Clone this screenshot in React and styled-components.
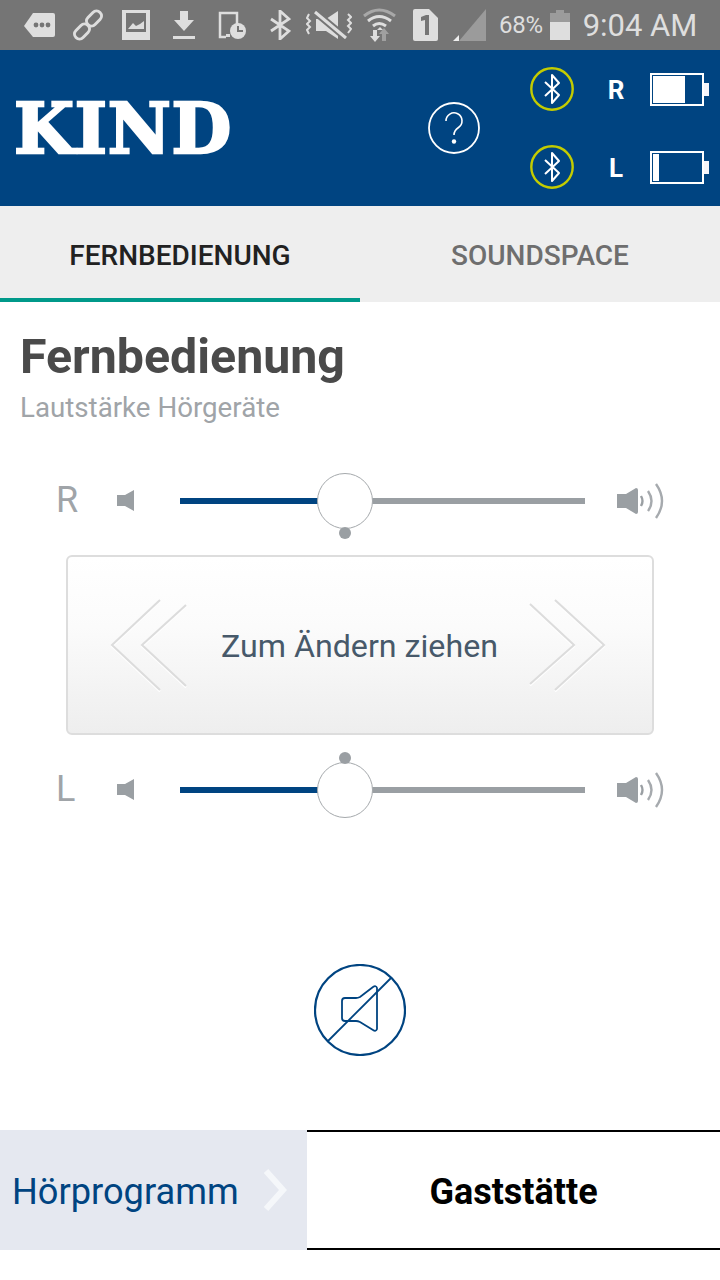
import React from "react";
import styled, { createGlobalStyle } from "styled-components";

const GlobalStyle = createGlobalStyle`
  html, body {
    margin: 0;
    padding: 0;
    background: #fff;
    font-family: Roboto, "Noto Sans", sans-serif;
  }
`;

const Page = styled.div`
  width: 720px;
  height: 1280px;
  overflow: hidden;
  display: flex;
  flex-direction: column;
  background: #fff;
`;

const StatusBar = styled.div`
  height: 50px;
  flex: none;
  background: #757575;
  display: flex;
  align-items: center;
  padding-left: 24px;
  color: #dedede;
`;

const StatusIcon = styled.svg`
  flex: none;
  margin-left: ${(p) => p.$gap || 0}px;
`;

const Percent = styled.span`
  font-size: 24px;
  margin-left: 13px;
  letter-spacing: -0.3px;
`;

const Clock = styled.span`
  font-size: 31px;
  margin-left: 13px;
`;

const Header = styled.header`
  height: 156px;
  flex: none;
  background: #004481;
  display: flex;
  align-items: center;
  padding-left: 14px;
  color: #fff;
`;

const Logo = styled.div`
  width: 217px;
  padding: 2px 0 0 0;
  box-sizing: border-box;
  font-family: "DejaVu Serif", "Liberation Serif", serif;
  font-weight: 700;
  font-size: 69px;
  line-height: 80px;
  letter-spacing: 0.7px;
  -webkit-text-stroke: 2.4px #fff;
  white-space: nowrap;
`;

const HelpIcon = styled.svg`
  margin-left: 197px;
  flex: none;
`;

const LinkColumn = styled.div`
  margin-left: 50px;
  display: flex;
  flex-direction: column;
  gap: 34px;
`;

const LinkRow = styled.div`
  display: flex;
  align-items: center;
  height: 44px;
`;

const SideLabel = styled.span`
  width: 84px;
  padding-top: 2px;
  text-align: center;
  font-size: 26px;
  font-weight: 700;
  margin-right: -8px;
`;

const Battery = styled.div`
  position: relative;
  box-sizing: border-box;
  width: 54px;
  height: 33px;
  border: 2px solid #fff;
  padding: 1px;
  display: flex;

  &::after {
    content: "";
    position: absolute;
    left: 52px;
    top: 8px;
    width: 5px;
    height: 13px;
    background: #f5f5fa;
  }
`;

const BatteryFill = styled.div`
  background: #fff;
`;

const Tabs = styled.nav`
  height: 96px;
  flex: none;
  display: flex;
  background: #eeeeee;
`;

const Tab = styled.div`
  box-sizing: border-box;
  width: 360px;
  display: flex;
  align-items: center;
  justify-content: center;
  padding-top: 6px;
  font-size: 28px;
  font-weight: 500;
  color: ${(p) => (p.$active ? "#212121" : "#6e6e6e")};
  border-bottom: 4px solid ${(p) => (p.$active ? "#00998a" : "transparent")};
`;

const Main = styled.main`
  flex: 1;
  display: flex;
  flex-direction: column;
  min-height: 0;
`;

const Title = styled.h1`
  margin: 29px 0 0 20px;
  font-size: 48.3px;
  line-height: 52px;
  font-weight: 700;
  color: #4a4a4a;
`;

const Subtitle = styled.div`
  margin: 10px 0 0 20px;
  font-size: 27.7px;
  line-height: 30px;
  color: #a0a4a8;
`;

const SliderRow = styled.div`
  margin-top: ${(p) => p.$top}px;
  height: 56px;
  padding-left: 57px;
  display: grid;
  grid-template-columns: 60px 63px 405px auto;
  align-items: center;
`;

const SideName = styled.span`
  font-size: 36px;
  color: #a0a4a8;
  line-height: 40px;
  margin-left: -1px;
  margin-top: -2px;
`;

const Track = styled.div`
  position: relative;
  height: 6px;
  background: #9a9fa3;
`;

const TrackFill = styled.div`
  height: 100%;
  background: #004481;
`;

const Thumb = styled.div`
  position: absolute;
  left: 137px;
  top: -25px;
  box-sizing: border-box;
  width: 56px;
  height: 56px;
  border-radius: 50%;
  background: #fff;
  border: 1px solid #a5a9ac;

  &::after {
    content: "";
    position: absolute;
    left: 21px;
    ${(p) => (p.$dot === "below" ? "top: 53px;" : "bottom: 53px;")}
    width: 12px;
    height: 12px;
    border-radius: 50%;
    background: #9a9fa3;
  }
`;

const LoudIcon = styled.svg`
  margin-left: 32px;
`;

const DragPad = styled.div`
  box-sizing: border-box;
  margin: 26px 0 0 66px;
  width: 588px;
  height: 180px;
  padding: 0 46px 0 42px;
  display: flex;
  align-items: center;
  justify-content: space-between;
  border: 2px solid #dddddd;
  border-radius: 6px;
  background: linear-gradient(#ffffff 0%, #fbfbfb 40%, #eeeeee 100%);
  font-size: 32.2px;
  color: #47596a;
`;

const PadLabel = styled.span`
  padding: 2px 0 0 3px;
`;

const MuteButton = styled.svg`
  margin: 146px auto 0;
  display: block;
  flex: none;
`;

const ProgramBar = styled.div`
  margin-top: 74px;
  height: 120px;
  flex: none;
  display: flex;
`;

const ProgramLabel = styled.div`
  width: 307px;
  box-sizing: border-box;
  padding: 0 20px 0 12px;
  display: flex;
  align-items: center;
  justify-content: space-between;
  background: #e5e8f0;
  color: #004481;
  font-size: 36.2px;
`;

const ProgramName = styled.span`
  padding-top: 3px;
`;

const ProgramValue = styled.div`
  flex: 1;
  display: flex;
  align-items: center;
  justify-content: center;
  padding-top: 4px;
  border-top: 2px solid #000;
  border-bottom: 2px solid #000;
  font-size: 36px;
  font-weight: 700;
  color: #000;
`;

function BluetoothMark({ size = 44 }) {
  return (
    <svg width={size} height={size} viewBox="0 0 44 44" fill="none">
      <circle cx="22" cy="22" r="20.7" stroke="#c3cc00" strokeWidth="2.4" />
      <path
        d="M15 15 29 28 22 36V8l7 8-14 13"
        stroke="#fff"
        strokeWidth="2"
        strokeLinejoin="round"
      />
    </svg>
  );
}

function Chevrons({ flip }) {
  const points = flip
    ? ["2,6 46,47 2,86", "27,2 76,47 27,92"]
    : ["50,2 2,47 50,92", "76,7 32,47 76,88"];
  return (
    <svg width="78" height="94" viewBox="0 0 78 94" fill="none">
      {points.map((pts) => (
        <g key={pts}>
          <polyline points={pts} stroke="#fff" strokeWidth="2" transform="translate(0 1.5)" />
          <polyline points={pts} stroke="#dcdcdc" strokeWidth="2" />
        </g>
      ))}
    </svg>
  );
}

function Slider({ name, top, dot }) {
  return (
    <SliderRow $top={top}>
      <SideName>{name}</SideName>
      <svg width="18" height="22" viewBox="0 0 18 22">
        <path d="M0 5h8l9-5v21l-9-5H0z" fill="#9a9fa3" />
      </svg>
      <Track>
        <TrackFill style={{ width: "34%" }} />
        <Thumb $dot={dot} />
      </Track>
      <LoudIcon width="48" height="36" viewBox="0 0 48 36" fill="none">
        <path d="M0 11h9l10-6a2 2 0 0 1 2 2v22a2 2 0 0 1-2 2L9 25H0z" fill="#9a9fa3" />
        <path d="M24 13q3 5 0 10" stroke="#9a9fa3" strokeWidth="2.4" />
        <path d="M31 8q7 10 0 20" stroke="#a6aaae" strokeWidth="2.4" />
        <path d="M39 1q12 17 0 34" stroke="#a6aaae" strokeWidth="2.4" />
      </LoudIcon>
    </SliderRow>
  );
}

export default function App() {
  return (
    <Page>
      <GlobalStyle />
      <StatusBar>
        <StatusIcon width="31" height="26" viewBox="0 0 31 26">
          <path d="M9 1h20a2 2 0 0 1 2 2v20a2 2 0 0 1-2 2H9L0 14z" fill="#dedede" />
          <circle cx="12" cy="13" r="2.4" fill="#757575" />
          <circle cx="18" cy="13" r="2.4" fill="#757575" />
          <circle cx="24" cy="13" r="2.4" fill="#757575" />
        </StatusIcon>
        <StatusIcon $gap={17} width="32" height="32" viewBox="0 0 32 32" fill="none" stroke="#dedede" strokeWidth="3">
          <rect x="1.5" y="17.5" width="17" height="10" rx="5" transform="rotate(-45 10 22.5)" />
          <rect x="13.5" y="4.5" width="17" height="10" rx="5" transform="rotate(-45 22 9.5)" />
        </StatusIcon>
        <StatusIcon $gap={18} width="28" height="30" viewBox="0 0 28 30">
          <path fillRule="evenodd" d="M0 0h28v30H0zM4 3v19h20V3z" fill="#dedede" />
          <path d="M6 19l5-6 3 3 4-2 4-3v8z" fill="#dedede" />
        </StatusIcon>
        <StatusIcon $gap={23} width="22" height="28" viewBox="0 0 22 28">
          <path d="M7 0h8v9h6L11 20 1 9h6zM0 25h22v3H0z" fill="#dedede" />
        </StatusIcon>
        <StatusIcon $gap={23} width="28" height="28" viewBox="0 0 28 28" fill="none">
          <path d="M8 26H2V2h17v11" stroke="#dedede" strokeWidth="2.5" />
          <path d="M8 23h4v3H8z" fill="#dedede" />
          <circle cx="20" cy="20" r="8" fill="#dedede" />
          <path d="M20 15v5h5" stroke="#757575" strokeWidth="2" />
        </StatusIcon>
        <StatusIcon $gap={24} width="21" height="30" viewBox="0 0 21 30" fill="none">
          <path d="M1 9l18 12-9 8V1l9 8L1 21" stroke="#dedede" strokeWidth="2.8" />
        </StatusIcon>
        <StatusIcon $gap={15} width="46" height="30" viewBox="0 0 46 30" fill="none">
          <path d="M10 9h10L32 1v28L20 21H10z" fill="#dedede" />
          <path d="M9 2 40 28" stroke="#757575" strokeWidth="7" />
          <path d="M9 2 40 28" stroke="#dedede" strokeWidth="3" />
          <path d="M3 4 1 8l3 3-3 3 3 3-3 3 2 4M42 4l3 3-3 3 3 3-3 3 3 3-3 4" stroke="#dedede" strokeWidth="2" />
        </StatusIcon>
        <StatusIcon $gap={11} width="33" height="34" viewBox="0 0 33 34" fill="none">
          <path d="M1 8q15-12 31 0" stroke="#a8a8a8" strokeWidth="3" />
          <path d="M5 13q11-9 23 0" stroke="#dedede" strokeWidth="3" />
          <path d="M10 18q6-5 13 0" stroke="#dedede" strokeWidth="3" />
          <path d="M14 22l3-3 3 3z" fill="#dedede" />
          <path d="M10 22h4v6h3l-5 6-5-6h3z" fill="#dedede" />
          <path d="M21 20l5 6h-3v7h-4v-7h-3z" fill="#a0a0a0" />
        </StatusIcon>
        <StatusIcon $gap={17} width="25" height="32" viewBox="0 0 25 32">
          <path d="M2 0h14l9 9v21a2 2 0 0 1-2 2H2a2 2 0 0 1-2-2V2a2 2 0 0 1 2-2z" fill="#dedede" />
          <path d="M8 8l5-2h3v20h-4V11l-4 1z" fill="#757575" />
        </StatusIcon>
        <StatusIcon $gap={15} width="33" height="32" viewBox="0 0 33 32">
          <path d="M33 0v32H6z" fill="#9b9b9b" />
          <path d="M6 26v6H0z" fill="#eeeeee" />
        </StatusIcon>
        <Percent>68%</Percent>
        <StatusIcon $gap={7} width="20" height="30" viewBox="0 0 20 30">
          <path d="M6 0h8v3h6v9H0V3h6z" fill="#9b9b9b" />
          <path d="M0 12h20v18H0z" fill="#dedede" />
        </StatusIcon>
        <Clock>9:04 AM</Clock>
      </StatusBar>

      <Header>
        <Logo>KIND</Logo>
        <HelpIcon width="52" height="52" viewBox="0 0 52 52" fill="none">
          <circle cx="26" cy="26" r="25" stroke="#fff" strokeWidth="1.8" />
          <path d="M18 19a8 8 0 1 1 12.5 6.5C27.500 27.500 26 29 26 33" stroke="#fff" strokeWidth="1.6" />
          <circle cx="26" cy="39.500" r="2.200" fill="#fff" />
        </HelpIcon>
        <LinkColumn>
          <LinkRow>
            <BluetoothMark />
            <SideLabel>R</SideLabel>
            <Battery>
              <BatteryFill style={{ width: 32 }} />
            </Battery>
          </LinkRow>
          <LinkRow>
            <BluetoothMark />
            <SideLabel>L</SideLabel>
            <Battery>
              <BatteryFill style={{ width: 6 }} />
            </Battery>
          </LinkRow>
        </LinkColumn>
      </Header>

      <Tabs>
        <Tab $active>FERNBEDIENUNG</Tab>
        <Tab>SOUNDSPACE</Tab>
      </Tabs>

      <Main>
        <Title>Fernbedienung</Title>
        <Subtitle>Lautstärke Hörgeräte</Subtitle>
        <Slider name="R" top={50} dot="below" />
        <DragPad>
          <Chevrons />
          <PadLabel>Zum Ändern ziehen</PadLabel>
          <Chevrons flip />
        </DragPad>
        <Slider name="L" top={27} dot="above" />
        <MuteButton width="92" height="92" viewBox="0 0 92 92" fill="none" stroke="#004481">
          <circle cx="46" cy="46" r="45" strokeWidth="2.200" />
          <path d="M14 77 77 14" strokeWidth="1.800" />
          <path
            d="M31 34h11q2 0 4-1l13-10q3-2 4 1v41q-1 3-4 1L46 58q-2-1-4-1H31q-3 0-3-3V37q0-3 3-3z"
            strokeWidth="1.800"
          />
        </MuteButton>
        <ProgramBar>
          <ProgramLabel>
            <ProgramName>Hörprogramm</ProgramName>
            <svg width="24" height="42" viewBox="0 0 24 42" fill="none">
              <path d="M3 2l17 19L3 40" stroke="#f5f7fa" strokeWidth="6" />
            </svg>
          </ProgramLabel>
          <ProgramValue>Gaststätte</ProgramValue>
        </ProgramBar>
      </Main>
    </Page>
  );
}
